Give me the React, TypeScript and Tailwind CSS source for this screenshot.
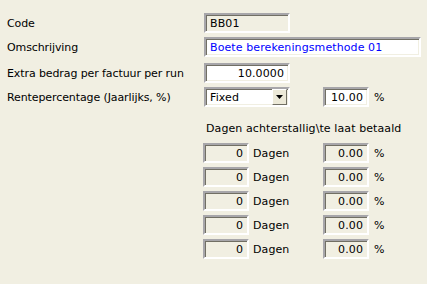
const sunken =
  "h-[20px] border-2 border-t-[#a7a6aa] border-l-[#a7a6aa] border-b-white border-r-white shadow-[inset_1px_1px_0_#716f64,inset_-1px_-1px_0_#f1efe2] flex items-center";

function Field({
  value,
  width,
  readOnly,
  align = "left",
  blue,
}: {
  value: string;
  width: string;
  readOnly?: boolean;
  align?: "left" | "right";
  blue?: boolean;
}) {
  return (
    <div
      className={`${sunken} ${width} ${readOnly ? "bg-[#f1efe2]" : "bg-white"} ${
        align === "right" ? "justify-end pr-[4px]" : "pl-[4px]"
      } ${blue ? "text-[#0000ff]" : "text-black"}`}
    >
      {value}
    </div>
  );
}

function Label({ children }: { children: string }) {
  return <div className="w-[204px] shrink-0 pl-[7px] tracking-[-0.1px]">{children}</div>;
}

export default function App() {
  return (
    <div
      className="h-[284px] w-[427px] whitespace-nowrap bg-[#f1efe2] text-[11px] leading-none tracking-[0.1px] text-black"
      style={{ fontFamily: '"DejaVu Sans", Verdana, sans-serif' }}
    >
      <div className="flex flex-col pt-[13px]">
        <div className="flex items-center">
          <Label>Code</Label>
          <Field value="BB01" width="w-[86px]" readOnly />
        </div>
        <div className="mt-[4px] flex items-center">
          <Label>Omschrijving</Label>
          <Field value="Boete berekeningsmethode 01" width="w-[217px]" blue />
        </div>
        <div className="mt-[6px] flex items-center">
          <Label>Extra bedrag per factuur per run</Label>
          <Field value="10.0000" width="w-[86px]" align="right" />
        </div>
        <div className="mt-[4px] flex items-center">
          <Label>Rentepercentage (Jaarlijks, %)</Label>
          <div className={`${sunken} w-[86px] bg-white pl-[4px] pr-[1px]`}>
            <span className="flex-1">Fixed</span>
            <div className="flex h-[16px] w-[15px] items-center justify-center border border-t-white border-l-white border-b-[#716f64] border-r-[#716f64] bg-[#ece9d8]">
              <svg width="7" height="4" viewBox="0 0 7 4">
                <path d="M0 0h7L3.5 4z" fill="#000" />
              </svg>
            </div>
          </div>
          <div className="w-[33px]" />
          <Field value="10.00" width="w-[46px]" align="right" />
          <span className="ml-[5px]">%</span>
        </div>

        <div className="mt-[16px] pl-[206px]">Dagen achterstallig\te laat betaald</div>

        <div className="mt-[9px] flex flex-col gap-[4px] pl-[203px]">
          {Array.from({ length: 5 }).map((_, i) => (
            <div key={i} className="flex items-center">
              <Field value="0" width="w-[46px]" readOnly align="right" />
              <span className="ml-[4px] w-[70px]">Dagen</span>
              <Field value="0.00" width="w-[46px]" readOnly align="right" />
              <span className="ml-[5px]">%</span>
            </div>
          ))}
        </div>
      </div>
    </div>
  );
}
